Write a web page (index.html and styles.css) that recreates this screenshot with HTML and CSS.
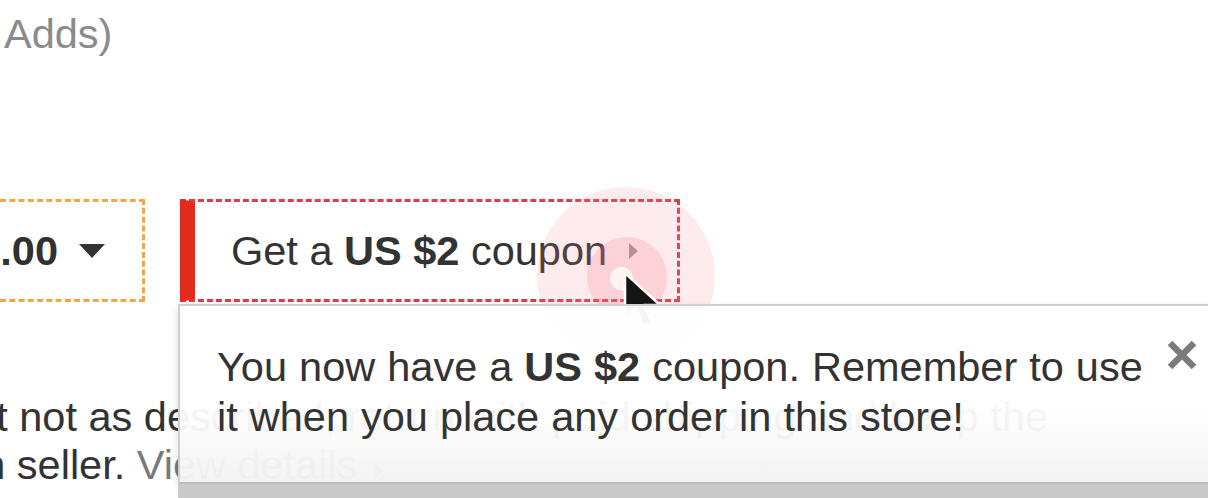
FILE: index.html
```html
<!DOCTYPE html>
<html lang="en">
<head>
<meta charset="utf-8">
<title>Store coupon</title>
<link rel="stylesheet" href="styles.css">
</head>
<body>
<div class="page">
  <p class="shipping-note">Adds)</p>

  <div class="coupon-row">
    <div class="price-box">
      <span class="price">US $10.00</span>
      <span class="caret"></span>
    </div>
    <div class="coupon-box">
      <span class="coupon-label">Get a <b>US $2</b> coupon</span>
      <span class="coupon-arrow"></span>
    </div>
  </div>

  <div class="policy">
    <div class="policy-line policy-line-1">but not as described, return with paid shipping and keep the</div>
    <div class="policy-line policy-line-2">upon seller. <a class="details-link" href="#">View details <span class="link-arrow"></span></a></div>
  </div>

  <div class="click-ring"></div>
  <div class="click-core"></div>
  <div class="click-dot"></div>
  <svg class="cursor" width="48" height="58" viewBox="0 0 48 58">
    <path d="M2 2 L2 47 L13 37 L21 55 L29 51 L21 34 L37 34 Z" fill="#151515" stroke="#fff" stroke-width="2.5" stroke-linejoin="round"/>
  </svg>

  <div class="popup">
    <p class="popup-text">You now have a <b>US $2</b> coupon. Remember to use it when you place any order in this store!</p>
    <button class="popup-close" type="button" aria-label="Close">
      <svg width="34" height="34" viewBox="0 0 34 34">
        <path d="M5 5 L29 29 M29 5 L5 29" stroke="#7b7b7b" stroke-width="6.5" stroke-linecap="butt"/>
      </svg>
    </button>
  </div>
</div>
</body>
</html>
```

FILE: styles.css
```css
* { box-sizing: border-box; }

html, body {
  margin: 0;
  padding: 0;
  background: #ffffff;
}

body {
  width: 1208px;
  height: 498px;
  overflow: hidden;
  font-family: "Liberation Sans", Arial, sans-serif;
  font-size: 41.5px;
  color: #333333;
}

.page {
  position: relative;
  width: 1208px;
  height: 498px;
  padding-top: 9px;
}

.shipping-note {
  margin: 0;
  padding-left: 4px;
  line-height: 50px;
  color: #8b8b8b;
}

.coupon-row {
  display: flex;
  gap: 35px;
  margin-top: 140px;
  height: 103px;
}

.price-box {
  width: 145px;
  height: 103px;
  flex: none;
  display: flex;
  align-items: center;
  justify-content: flex-end;
  gap: 21px;
  padding-right: 37px;
  border: 3px dashed #f4a545;
  border-left: none;
  white-space: nowrap;
}

.price {
  font-weight: bold;
  color: #2f3133;
}

.caret {
  width: 0;
  height: 0;
  border-left: 13px solid transparent;
  border-right: 13px solid transparent;
  border-top: 14px solid #333333;
  flex: none;
}

.coupon-box {
  width: 500px;
  height: 103px;
  flex: none;
  display: flex;
  align-items: center;
  padding-left: 36px;
  border: 3px dashed #e03c42;
  border-left: 15px solid #e42b20;
  white-space: nowrap;
}

.coupon-label b {
  font-weight: bold;
}

.coupon-arrow {
  width: 0;
  height: 0;
  margin-left: 22px;
  border-left: 9px solid #9a9a9a;
  border-top: 8px solid transparent;
  border-bottom: 8px solid transparent;
}

.policy {
  margin-top: 91px;
}

.policy-line {
  white-space: nowrap;
  line-height: 48px;
}

.policy-line-1 {
  margin-left: -50px;
}

.policy-line-2 {
  margin-left: -87px;
}

.details-link {
  color: #7a7a7a;
  text-decoration: none;
}

.link-arrow {
  display: inline-block;
  width: 0;
  height: 0;
  margin-left: 6px;
  border-left: 9px solid #8a8a8a;
  border-top: 8px solid transparent;
  border-bottom: 8px solid transparent;
}

/* click feedback over the coupon button */
.click-ring {
  position: absolute;
  left: 537px;
  top: 187px;
  width: 178px;
  height: 178px;
  border-radius: 50%;
  background: rgba(248, 130, 148, 0.16);
}

.click-core {
  position: absolute;
  left: 587px;
  top: 237px;
  width: 80px;
  height: 80px;
  border-radius: 50%;
  background: rgba(246, 120, 140, 0.22);
}

.click-dot {
  position: absolute;
  left: 610px;
  top: 267px;
  width: 23px;
  height: 23px;
  border-radius: 50%;
  background: rgba(255, 255, 255, 0.75);
}

.cursor {
  position: absolute;
  left: 623px;
  top: 271px;
}

/* coupon notice popup */
.popup {
  position: absolute;
  left: 178px;
  top: 304px;
  width: 1070px;
  height: 180px;
  display: flex;
  align-items: flex-start;
  padding: 36px 0 0 37px;
  border: 2px solid #cfcfcf;
  border-bottom-color: #bdbdbd;
  background: linear-gradient(rgba(255, 255, 255, 0.955) 55%, rgba(243, 243, 243, 0.96));
  box-shadow: 0 15px 0 0 #cacaca, 0 3px 8px rgba(0, 0, 0, 0.12);
}

.popup-text {
  width: 945px;
  margin: 0;
  line-height: 50px;
  color: #333333;
  word-spacing: 0.5px;
}

.popup-close {
  margin: -4px 0 0 3px;
  padding: 0;
  border: none;
  background: none;
  width: 34px;
  height: 34px;
  cursor: pointer;
}

.popup-close svg {
  display: block;
}
```
